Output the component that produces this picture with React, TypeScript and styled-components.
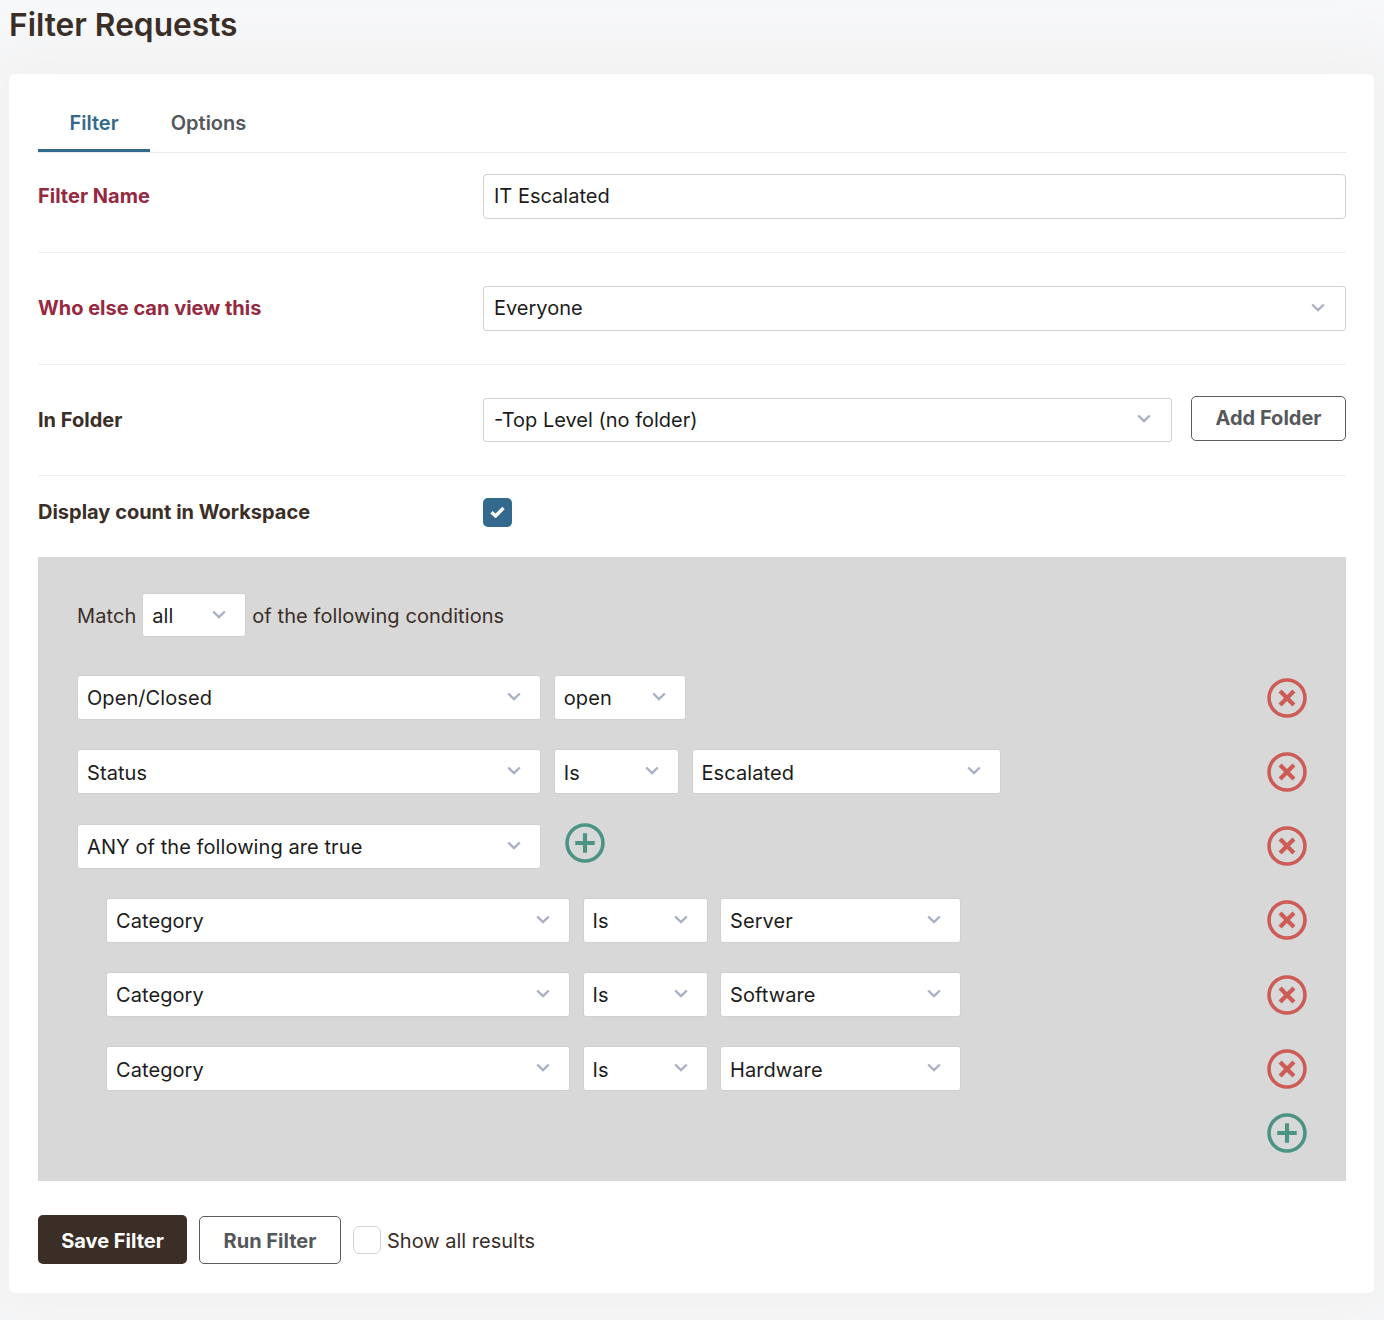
import React from "react";
import styled, { createGlobalStyle } from "styled-components";

const Global = createGlobalStyle`
  html, body { margin: 0; padding: 0; }
  body {
    font-family: Inter, "Liberation Sans", sans-serif;
    color: #3a2e27;
    background: #f8f9fb;
    min-height: 1320px;
  }
  * { box-sizing: border-box; }
`;

const Page = styled.div`
  width: 1384px;
  height: 1320px;
  padding: 0 10px 0 9px;
  overflow: hidden;
`;
const Title = styled.h1`
  margin: 0;
  height: 74px;
  padding: 7px 0 0;
  font-size: 31.7px;
  line-height: 36px;
  font-weight: 600;
  color: #3a2e27;
`;
const Card = styled.main`
  background: #fff;
  border-radius: 6px;
  height: 1219px;
  padding: 0 28px 0 29px;
  box-shadow: 0 0 70px 30px #f1f1f1;
`;
const Tabs = styled.nav`
  display: flex;
  height: 79px;
  padding-top: 26px;
  border-bottom: 1.5px solid #eaeaea;
`;
const Tab = styled.div<{ $active?: boolean }>`
  height: 52px;
  padding: 10px 0 0;
  text-align: center;
  font-size: 20px;
  line-height: 26px;
  font-weight: 600;
  width: ${(p) => (p.$active ? "112px" : "117px")};
  color: ${(p) => (p.$active ? "#33698c" : "#55585b")};
  border-bottom: ${(p) => (p.$active ? "3px solid #33698c" : "none")};
`;
const Row = styled.section<{ $height: number; $top: number; $last?: boolean }>`
  display: grid;
  grid-template-columns: 445px 1fr;
  align-items: start;
  height: ${(p) => p.$height}px;
  padding-top: ${(p) => p.$top}px;
  border-bottom: ${(p) => (p.$last ? "none" : "1.5px solid #eeeeee")};
`;
const Label = styled.label<{ $required?: boolean }>`
  font-size: 20px;
  line-height: 45px;
  font-weight: 700;
  color: ${(p) => (p.$required ? "#96283f" : "#3a2e27")};
`;
const TextInput = styled.input`
  display: block;
  width: 100%;
  height: 45px;
  padding: 0 10px 2px;
  border: 1.5px solid #d0d0d0;
  border-radius: 4px;
  background: #fff;
  font: 400 20px Inter, sans-serif;
  color: #1c1c1c;
  outline: none;
`;
const SelectBox = styled.div<{ $width?: number; $inPanel?: boolean; $height?: number }>`
  display: flex;
  align-items: center;
  justify-content: space-between;
  flex: none;
  width: ${(p) => (p.$width ? `${p.$width}px` : "100%")};
  height: ${(p) => p.$height ?? 45}px;
  padding: ${(p) => (p.$inPanel ? "0 19px 0 9px" : "0 20px 0 10px")};
  background: #fff;
  border: 1.5px solid #d0d0d0;
  border-radius: 3px;
  font-size: 20px;
  letter-spacing: ${(p) => (p.$inPanel ? "0.08px" : "0")};
  color: #1c1c1c;
`;
const SelectText = styled.span<{ $inPanel?: boolean }>`
  padding-top: ${(p) => (p.$inPanel ? "1.5px" : "0")};
`;
const Chevron = styled.svg`
  width: 14px;
  height: 9px;
  flex: none;
  margin-top: -2px;
  fill: none;
  stroke: #a9b0c4;
  stroke-width: 2.4;
`;
const FolderRow = styled.div`
  display: flex;
  gap: 19px;
  align-items: flex-start;
`;
const OutlineButton = styled.button<{ $width: number; $height: number }>`
  flex: none;
  width: ${(p) => p.$width}px;
  height: ${(p) => p.$height}px;
  background: #fff;
  border: 1.5px solid #5c5c5c;
  border-radius: 5px;
  font: 700 20px Inter, sans-serif;
  color: #55585b;
  padding: 0;
`;
const FolderButton = styled(OutlineButton)`
  margin-top: -2px;
`;
const RunButton = styled(OutlineButton)`
  padding-top: 3px;
`;
const Check = styled.span`
  display: flex;
  align-items: center;
  justify-content: center;
  width: 29px;
  height: 29px;
  background: #33698c;
  border-radius: 5px;
  margin-top: 8px;
`;
const CheckMark = styled.svg`
  width: 15px;
  height: 12px;
  fill: none;
  stroke: #fff;
  stroke-width: 3.4;
`;
const Panel = styled.section`
  height: 624px;
  background: #d8d8d8;
  padding: 36px 39px 0;
`;
const MatchRow = styled.div`
  display: flex;
  align-items: center;
  gap: 6px;
  height: 44px;
  margin-bottom: 38px;
  font-size: 20px;
  letter-spacing: 0.08px;
  color: #3a2e27;
`;
const MatchText = styled.span`
  padding-top: 2px;
`;
const Condition = styled.div<{ $indent?: boolean }>`
  display: flex;
  align-items: flex-start;
  gap: ${(p) => (p.$indent ? "12.5px" : "12.75px")};
  height: 45px;
  margin-bottom: 29.3px;
  padding-left: ${(p) => (p.$indent ? "29px" : "0")};
`;
const RoundIcon = styled.svg<{ $tone: "red" | "green" }>`
  flex: none;
  display: block;
  width: 40px;
  height: 40px;
  fill: none;
  stroke: ${(p) => (p.$tone === "red" ? "#cd5c56" : "#4b9484")};
  stroke-width: 3.7;
`;
const RowAction = styled.div`
  margin-left: auto;
  margin-top: 2.5px;
`;
const InlineAdd = styled.div`
  margin: -0.5px 0 0 11px;
`;
const BottomAdd = styled.div`
  display: flex;
  justify-content: flex-end;
  margin-top: -7.5px;
`;
const Footer = styled.footer`
  display: flex;
  align-items: center;
  height: 49px;
  margin-top: 34px;
`;
const SaveButton = styled.button`
  width: 149px;
  height: 49px;
  background: #3a2e26;
  color: #fff;
  border: none;
  border-radius: 5px;
  font: 700 20px Inter, sans-serif;
  padding: 3px 0 0;
  margin-right: 12px;
`;
const EmptyCheck = styled.span`
  width: 28px;
  height: 28px;
  margin: 0 6px 0 12px;
  border: 1.5px solid #d3d3d3;
  border-radius: 6px;
  background: #fff;
`;
const CheckLabel = styled.span`
  font-size: 20px;
  padding-top: 3px;
  color: #3a2e27;
`;

const Select = ({ value, width, inPanel, height }: { value: string; width?: number; inPanel?: boolean; height?: number }) => (
  <SelectBox $width={width} $inPanel={inPanel} $height={height}>
    <SelectText $inPanel={inPanel}>{value}</SelectText>
    <Chevron viewBox="0 0 14 9"><path d="M1.2 1.5 7 7l5.8-5.5" /></Chevron>
  </SelectBox>
);
const Remove = () => (
  <RoundIcon $tone="red" viewBox="0 0 41 41">
    <circle cx="20.5" cy="20.5" r="18.4" />
    <path d="M13.4 13.4l14.2 14.2M27.6 13.4 13.4 27.6" strokeWidth="4.4" />
  </RoundIcon>
);
const Add = () => (
  <RoundIcon $tone="green" viewBox="0 0 41 41">
    <circle cx="20.5" cy="20.5" r="18.4" />
    <path d="M20.5 10.5v20M10.5 20.5h20" strokeWidth="4.2" />
  </RoundIcon>
);

const groups = ["Server", "Software", "Hardware"];

export default function App() {
  return (
    <Page>
      <Global />
      <Title>Filter Requests</Title>
      <Card>
        <Tabs>
          <Tab $active>Filter</Tab>
          <Tab>Options</Tab>
        </Tabs>
        <Row $height={99.5} $top={21}>
          <Label $required>Filter Name</Label>
          <TextInput defaultValue="IT Escalated" />
        </Row>
        <Row $height={112} $top={33}>
          <Label $required>Who else can view this</Label>
          <Select value="Everyone" />
        </Row>
        <Row $height={111} $top={33}>
          <Label>In Folder</Label>
          <FolderRow>
            <Select value="-Top Level (no folder)" width={689} height={44} />
            <FolderButton $width={155} $height={45}>Add Folder</FolderButton>
          </FolderRow>
        </Row>
        <Row $height={81.5} $top={14} $last>
          <Label>Display count in Workspace</Label>
          <Check>
            <CheckMark viewBox="0 0 15 12"><path d="M1.5 6.2 5.6 10 13.5 2" /></CheckMark>
          </Check>
        </Row>
        <Panel>
          <MatchRow>
            <MatchText>Match</MatchText>
            <Select value="all" width={104} height={44} inPanel />
            <MatchText>of the following conditions</MatchText>
          </MatchRow>
          <Condition>
            <Select value="Open/Closed" width={464} inPanel />
            <Select value="open" width={132} inPanel />
            <RowAction><Remove /></RowAction>
          </Condition>
          <Condition>
            <Select value="Status" width={464} inPanel />
            <Select value="Is" width={125} inPanel />
            <Select value="Escalated" width={309} inPanel />
            <RowAction><Remove /></RowAction>
          </Condition>
          <Condition>
            <Select value="ANY of the following are true" width={464} inPanel />
            <InlineAdd><Add /></InlineAdd>
            <RowAction><Remove /></RowAction>
          </Condition>
          {groups.map((g) => (
            <Condition key={g} $indent>
              <Select value="Category" width={464} inPanel />
              <Select value="Is" width={125} inPanel />
              <Select value={g} width={241} inPanel />
              <RowAction><Remove /></RowAction>
            </Condition>
          ))}
          <BottomAdd><Add /></BottomAdd>
        </Panel>
        <Footer>
          <SaveButton>Save Filter</SaveButton>
          <RunButton $width={142} $height={48}>Run Filter</RunButton>
          <EmptyCheck />
          <CheckLabel>Show all results</CheckLabel>
        </Footer>
      </Card>
    </Page>
  );
}
